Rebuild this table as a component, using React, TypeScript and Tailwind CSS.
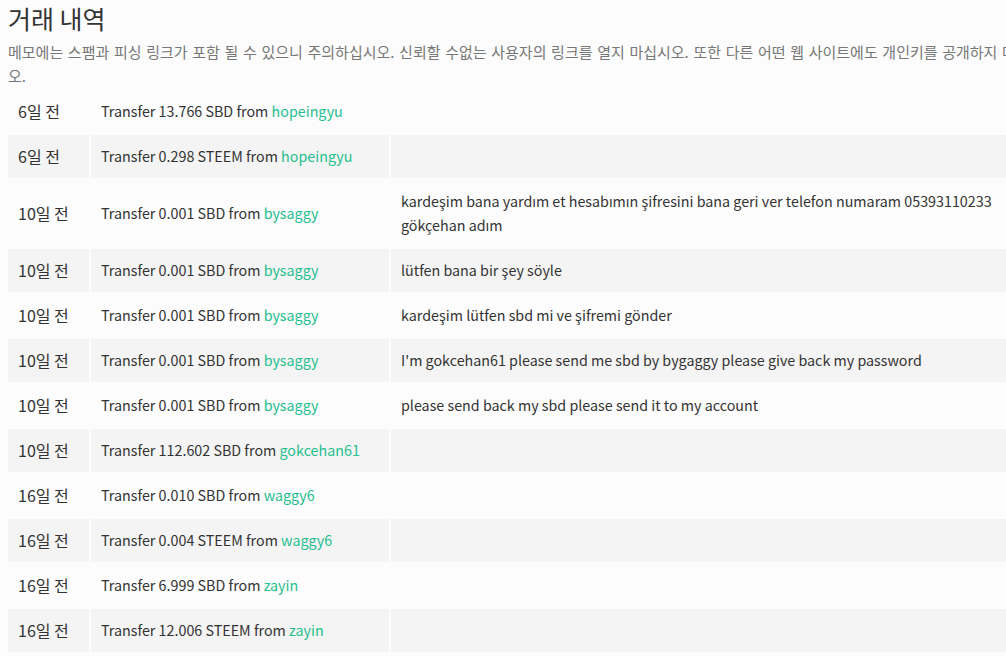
const transfers = [
  { when: '6일 전', amount: '13.766 SBD', from: 'hopeingyu', memo: '' },
  { when: '6일 전', amount: '0.298 STEEM', from: 'hopeingyu', memo: '' },
  {
    when: '10일 전',
    amount: '0.001 SBD',
    from: 'bysaggy',
    memo: 'kardeşim bana yardım et hesabımın şifresini bana geri ver telefon numaram 05393110233 gökçehan adım',
  },
  { when: '10일 전', amount: '0.001 SBD', from: 'bysaggy', memo: 'lütfen bana bir şey söyle' },
  { when: '10일 전', amount: '0.001 SBD', from: 'bysaggy', memo: 'kardeşim lütfen sbd mi ve şifremi gönder' },
  {
    when: '10일 전',
    amount: '0.001 SBD',
    from: 'bysaggy',
    memo: "I'm gokcehan61 please send me sbd by bygaggy please give back my password",
  },
  { when: '10일 전', amount: '0.001 SBD', from: 'bysaggy', memo: 'please send back my sbd please send it to my account' },
  { when: '10일 전', amount: '112.602 SBD', from: 'gokcehan61', memo: '' },
  { when: '16일 전', amount: '0.010 SBD', from: 'waggy6', memo: '' },
  { when: '16일 전', amount: '0.004 STEEM', from: 'waggy6', memo: '' },
  { when: '16일 전', amount: '6.999 SBD', from: 'zayin', memo: '' },
  { when: '16일 전', amount: '12.006 STEEM', from: 'zayin', memo: '' },
]

export default function App() {
  return (
    <div
      className="w-screen min-h-screen overflow-hidden bg-[#fcfcfc] text-[#333]"
      style={{ fontFamily: '"Noto Sans CJK KR", "Noto Sans", sans-serif' }}
    >
      <div className="w-[1060px] pl-2">
        {/* Header */}
        <h4 className="text-[25px] leading-[36px] font-normal mb-[4px]">거래 내역</h4>
        <p className="w-[1040px] text-[15px] leading-6 text-[#777] [word-spacing:1.3px]">
          메모에는 스팸과 피싱 링크가 포함 될 수 있으니 주의하십시오. 신뢰할 수없는 사용자의 링크를 열지 마십시오. 또한 다른 어떤 웹 사이트에도 개인키를 공개하지 마십시오.
        </p>

        {/* Transfers */}
        <table className="w-[1017px] -ml-[2px] table-fixed border-separate border-spacing-[2px] text-[14.3px] leading-6">
          <colgroup>
            <col className="w-[81px]" />
            <col className="w-[298px]" />
            <col />
          </colgroup>
          <tbody>
            {transfers.map((t, i) => (
              <tr key={i} className={i % 2 === 1 ? 'bg-[#f4f4f4]' : ''}>
                <td className="px-[10px] pt-[9px] pb-[10px] align-middle text-[16px]">{t.when}</td>
                <td className="px-[10px] pt-[9px] pb-[10px] align-middle">
                  Transfer {t.amount} from <span className="text-[#1fbf8f]">{t.from}</span>
                </td>
                <td className="px-[10px] pt-[9px] pb-[10px] align-middle">{t.memo}</td>
              </tr>
            ))}
          </tbody>
        </table>
      </div>
    </div>
  )
}
